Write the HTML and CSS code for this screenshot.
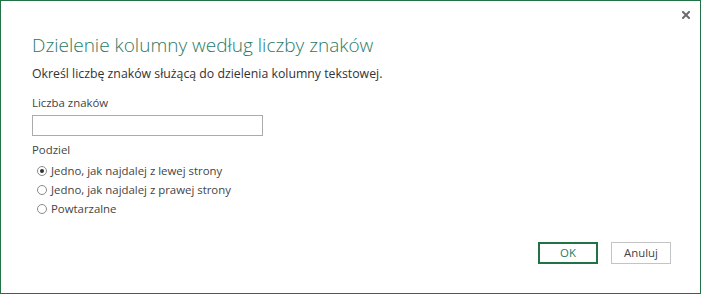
FILE: index.html
```html
<!DOCTYPE html>
<html lang="pl">
<head>
<meta charset="utf-8">
<link rel="stylesheet" href="styles.css">
</head>
<body>
<div class="dialog">
  <div class="topbar">
    <span class="close" aria-label="Zamknij">
      <svg width="8" height="8" viewBox="0 0 8 8"><path d="M1 1L7 7M7 1L1 7" stroke="#6d6d6d" stroke-width="2" stroke-linecap="square"/></svg>
    </span>
  </div>
  <div class="content">
    <h1 class="title">Dzielenie kolumny według liczby znaków</h1>
    <p class="desc">Określ liczbę znaków służącą do dzielenia kolumny tekstowej.</p>
    <label class="label">Liczba znaków</label>
    <div class="input"></div>
    <div class="label split">Podziel</div>
    <div class="radios">
      <div class="radio"><span class="dot checked"></span><span>Jedno, jak najdalej z lewej strony</span></div>
      <div class="radio"><span class="dot"></span><span>Jedno, jak najdalej z prawej strony</span></div>
      <div class="radio"><span class="dot"></span><span>Powtarzalne</span></div>
    </div>
  </div>
  <div class="buttons">
    <div class="btn primary">OK</div>
    <div class="btn">Anuluj</div>
  </div>
</div>
</body>
</html>
```
FILE: styles.css
```css
* { box-sizing: border-box; }
html, body { margin: 0; padding: 0; background: #fff; }
body { font-family: "Open Sans", "Noto Sans", sans-serif; color: #444; }
.dialog {
  width: 701px; height: 294px;
  border: 1px solid #217346;
  display: flex; flex-direction: column;
  position: relative;
}
.topbar { height: 30px; display: flex; justify-content: flex-end; }
.close { position: absolute; right: 10px; top: 10px; width: 8px; height: 8px; display: flex; }
.content { padding: 0 0 0 31px; display: flex; flex-direction: column; align-items: flex-start; }
.title {
  margin: 0; font-weight: 300; font-size: 19px; line-height: 28px;
  color: #2b7a66; letter-spacing: 0;
}
.desc { margin: 6px 0 0; font-size: 12.3px; line-height: 18px; color: #333; }
.label { margin-top: 12px; font-size: 11.4px; line-height: 16px; color: #444; }
.input { margin-top: 4px; width: 231px; height: 21px; border: 1px solid #ababab; background: #fff; }
.split { margin-top: 6px; }
.radios { margin-top: 3px; display: flex; flex-direction: column; padding-left: 5px; }
.radio { display: flex; align-items: center; gap: 4px; height: 19px; font-size: 11.4px; color: #444; }
.dot { width: 10px; height: 10px; border: 1px solid #8a8a8a; border-radius: 50%; display: flex; align-items: center; justify-content: center; }
.dot.checked::after { content: ""; width: 4px; height: 4px; border-radius: 50%; background: #333; }
.buttons { margin-top: auto; margin-bottom: 29px; padding-right: 29px; display: flex; justify-content: flex-end; gap: 13px; }
.btn { width: 60px; height: 22px; border: 1px solid #c4c4c4; font-size: 11.4px; line-height: 20px; text-align: center; color: #444; }
.btn.primary { border: 2px solid #217346; line-height: 18px; color: #2b7a66; }
```
